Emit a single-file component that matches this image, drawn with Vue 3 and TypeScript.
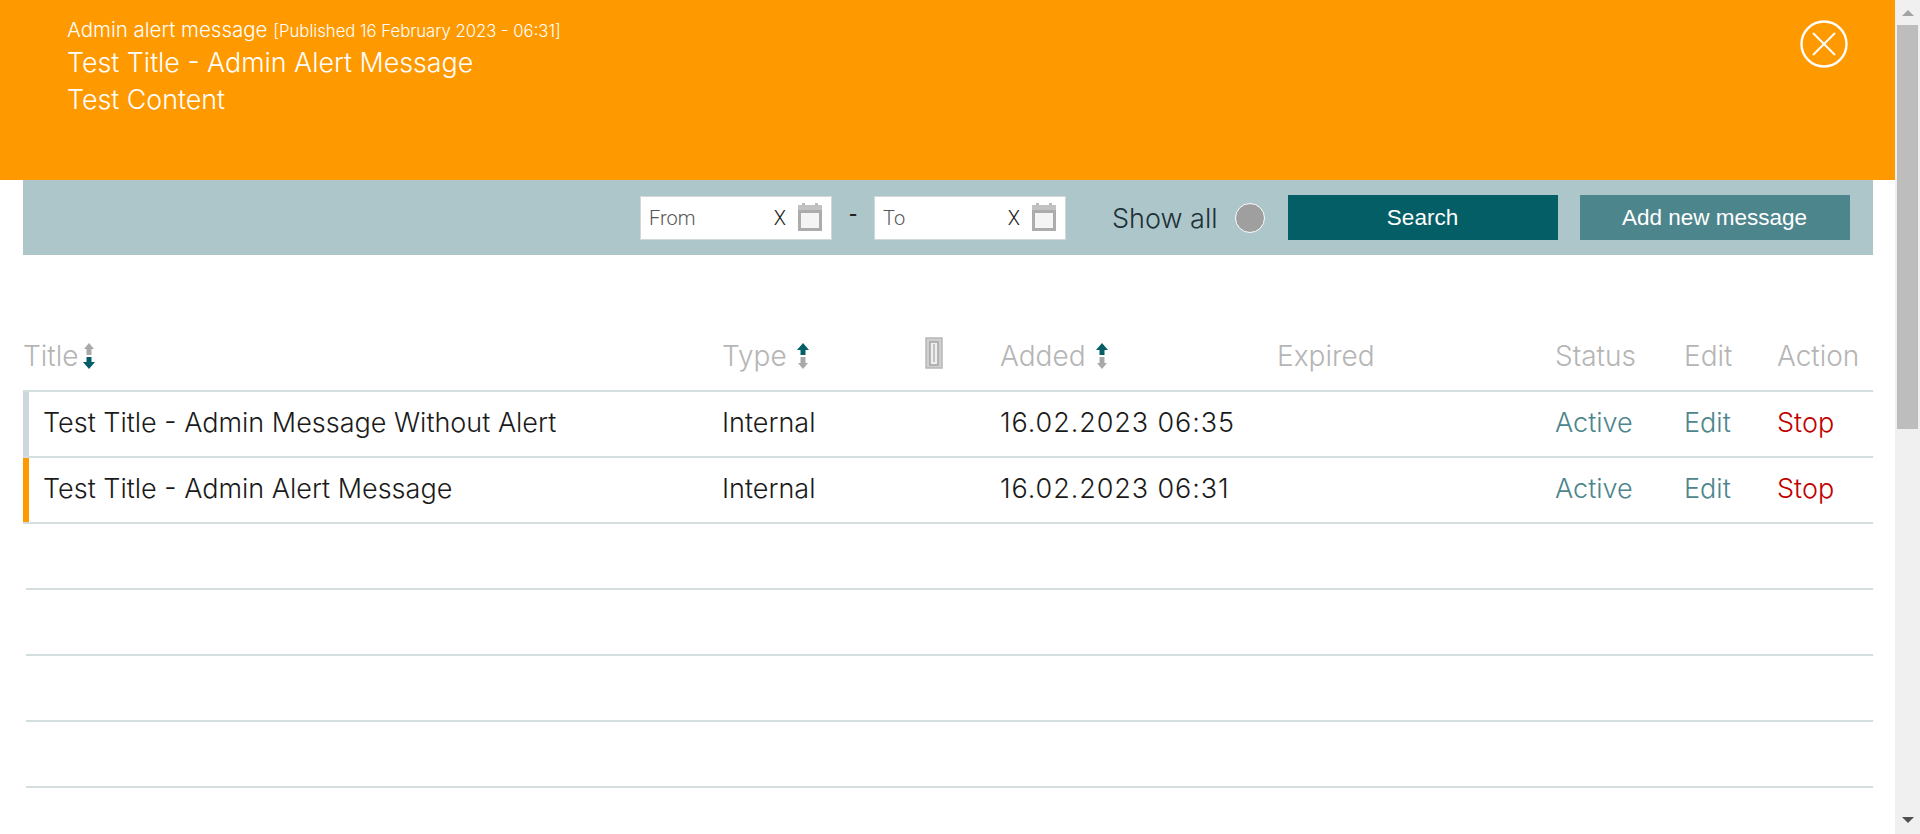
<script setup lang="ts">
interface Message {
  title: string
  type: string
  added: string
  marker: string
}

const messages: Message[] = [
  { title: 'Test Title - Admin Message Without Alert', type: 'Internal', added: '16.02.2023 06:35', marker: 'plain' },
  { title: 'Test Title - Admin Alert Message', type: 'Internal', added: '16.02.2023 06:31', marker: 'flagged' },
]

const emptyRows = [1, 2, 3, 4, 5, 6]
</script>

<template>
  <div class="page">
    <main class="content">
      <section class="alert">
        <div class="alert-text">
          <div class="alert-head">Admin alert message <span class="alert-date">[Published 16 February 2023 - 06:31]</span></div>
          <div class="alert-line">Test Title - Admin Alert Message</div>
          <div class="alert-line">Test Content</div>
        </div>
        <svg class="alert-close" viewBox="0 0 48 48" width="48" height="48">
          <circle cx="24" cy="24" r="22.5" fill="none" stroke="#fff" stroke-width="2.4" />
          <path d="M13 13 35 35M35 13 13 35" stroke="#fff" stroke-width="2" fill="none" />
        </svg>
      </section>

      <section class="filters">
        <div class="date-field">
          <span class="date-hint">From</span>
          <span class="date-clear">X</span>
          <svg class="date-icon" viewBox="0 0 24 28" width="24" height="28">
            <path d="M0 2h24v7H0z" fill="#c2c2c2" />
            <path d="M4 0h3v3H4zM17 0h3v3h-3z" fill="#bcbcbc" />
            <path d="M1.5 8.5h21v18h-21z" fill="#f4f4f4" stroke="#acacac" stroke-width="3" />
          </svg>
        </div>
        <span class="date-dash">-</span>
        <div class="date-field">
          <span class="date-hint">To</span>
          <span class="date-clear">X</span>
          <svg class="date-icon" viewBox="0 0 24 28" width="24" height="28">
            <path d="M0 2h24v7H0z" fill="#c2c2c2" />
            <path d="M4 0h3v3H4zM17 0h3v3h-3z" fill="#bcbcbc" />
            <path d="M1.5 8.5h21v18h-21z" fill="#f4f4f4" stroke="#acacac" stroke-width="3" />
          </svg>
        </div>
        <span class="show-all">Show all</span>
        <span class="show-toggle"></span>
        <button class="btn btn-search">Search</button>
        <button class="btn btn-add">Add new message</button>
      </section>

      <section class="table">
        <div class="row head">
          <div class="cell tight">
            Title
            <svg class="sort" viewBox="0 0 12 26" width="12" height="26">
              <path d="M6 0 11 6H8.5v6h-5V6H1z" fill="#a9a9a9" />
              <path d="M3.5 14h5v5H12l-6 7-6-7h3.5z" fill="#045e66" />
            </svg>
          </div>
          <div class="cell">
            Type
            <svg class="sort" viewBox="0 0 12 26" width="12" height="26">
              <path d="M6 0 12 7H8.5v5h-5V7H0z" fill="#045e66" />
              <path d="M3.5 14h5v6H11l-5 6-5-6h2.5z" fill="#a9a9a9" />
            </svg>
          </div>
          <div class="cell">
            <svg class="clip" viewBox="0 0 18 32" width="18" height="32">
              <path d="M1 1h16v30H1z" fill="#cfcfcf" stroke="#b8b8b8" stroke-width="1.5" />
              <path d="M5 5h8v23H5z" fill="#eee" stroke="#a5a5a5" stroke-width="1.5" />
              <path d="M8.4 7h1.2v18H8.4z" fill="#a5a5a5" />
            </svg>
          </div>
          <div class="cell">
            Added
            <svg class="sort" viewBox="0 0 12 26" width="12" height="26">
              <path d="M6 0 12 7H8.5v5h-5V7H0z" fill="#045e66" />
              <path d="M3.5 14h5v6H11l-5 6-5-6h2.5z" fill="#a9a9a9" />
            </svg>
          </div>
          <div class="cell">Expired</div>
          <div class="cell">Status</div>
          <div class="cell">Edit</div>
          <div class="cell">Action</div>
        </div>

        <div v-for="m in messages" :key="m.title" class="row item" :class="m.marker">
          <div class="cell title">{{ m.title }}</div>
          <div class="cell">{{ m.type }}</div>
          <div class="cell"></div>
          <div class="cell added">{{ m.added }}</div>
          <div class="cell"></div>
          <div class="cell link">Active</div>
          <div class="cell link">Edit</div>
          <div class="cell stop">Stop</div>
        </div>

        <div v-for="n in emptyRows" :key="n" class="row blank"></div>
      </section>
    </main>

    <aside class="scrollbar">
      <span class="arrow up"></span>
      <span class="thumb"></span>
      <span class="arrow down"></span>
    </aside>
  </div>
</template>

<style>
html,
body {
  margin: 0;
  height: 100%;
  overflow: hidden;
  background: #fff;
}
</style>

<style scoped>
.page {
  display: flex;
  height: 834px;
  overflow: hidden;
  font-family: 'Inter', 'Liberation Sans', sans-serif;
  font-weight: 300;
}

.content {
  flex: 1;
  min-width: 0;
}

.alert {
  height: 180px;
  box-sizing: border-box;
  background: #ff9900;
  color: #fff;
  display: flex;
  justify-content: space-between;
  align-items: flex-start;
  padding: 17px 47px 0 67px;
}

.alert-head {
  font-size: 20.5px;
  line-height: 25px;
}

.alert-date {
  font-size: 16.7px;
}

.alert-line {
  font-size: 26.8px;
  line-height: 37px;
}

.alert-close {
  margin-top: 3px;
}

.filters {
  height: 75px;
  margin: 0 22px 0 23px;
  background: #adc6ca;
  display: flex;
  align-items: center;
  padding-left: 617px;
  padding-right: 22px;
}

.date-field {
  width: 192px;
  height: 44px;
  box-sizing: border-box;
  background: #fff;
  border: 1px solid #d0d8da;
  display: flex;
  align-items: center;
  padding: 0 9px 0 8px;
  font-family: 'Roboto', sans-serif;
  font-weight: 300;
  font-size: 20px;
}

.date-hint {
  flex: 1;
  color: #555;
}

.date-clear {
  color: #222;
  margin-right: 12px;
}

.date-icon {
  margin-top: -2px;
}

.date-dash {
  width: 42px;
  text-align: center;
  font-family: 'Roboto', sans-serif;
  font-weight: 400;
  font-size: 26px;
  color: #222;
  margin-top: -7px;
}

.show-all {
  margin-left: 46px;
  margin-top: 2px;
  font-size: 27px;
  color: #1d3138;
}

.show-toggle {
  width: 30px;
  height: 30px;
  box-sizing: border-box;
  border-radius: 50%;
  background: #9f9f9f;
  border: 1px solid #fff;
  margin-left: 17px;
}

.btn {
  height: 45px;
  width: 270px;
  border: 0;
  padding: 0;
  color: #fff;
  font-family: 'Liberation Sans', Arial, sans-serif;
  font-size: 22.5px;
}

.btn-search {
  background: #045e66;
  margin-left: 23px;
}

.btn-add {
  background: #4d858d;
  margin-left: 22px;
}

.table {
  margin: 0 22px 0 23px;
  padding-top: 71px;
}

.row {
  display: grid;
  grid-template-columns: 699px 203px 75px 277px 278px 129px 93px 1fr;
  height: 66px;
  box-sizing: border-box;
  padding-bottom: 4px;
  border-bottom: 2px solid #d5dedf;
  font-size: 27px;
  color: #1a1a1a;
}

.cell {
  display: flex;
  align-items: center;
  gap: 10px;
  white-space: nowrap;
}

.cell.tight {
  gap: 5px;
}

.head {
  padding-bottom: 5px;
  font-size: 28px;
  color: #b5b5b5;
}

.item {
  box-shadow: inset 6px 0 0 #cdd7de;
}

.item.flagged {
  box-shadow: inset 6px 0 0 #ff9900;
}

.item .title {
  padding-left: 20px;
}

.item .added {
  letter-spacing: 0.9px;
}

.blank {
  margin-left: 3px;
}

.link {
  color: #4d858d;
}

.stop {
  color: #c00000;
}

.clip {
  margin-top: -6px;
}

.scrollbar {
  width: 25px;
  flex: none;
  background: #f0f0f0;
  position: relative;
  display: flex;
  justify-content: center;
}

.arrow {
  position: absolute;
  width: 0;
  height: 0;
  border-left: 6px solid transparent;
  border-right: 6px solid transparent;
}

.arrow.up {
  top: 10px;
  border-bottom: 6px solid #a3a3a3;
}

.arrow.down {
  bottom: 11px;
  border-top: 6px solid #505050;
}

.thumb {
  position: absolute;
  top: 25px;
  left: 2px;
  width: 21px;
  height: 404px;
  background: #bdbdbd;
}
</style>
